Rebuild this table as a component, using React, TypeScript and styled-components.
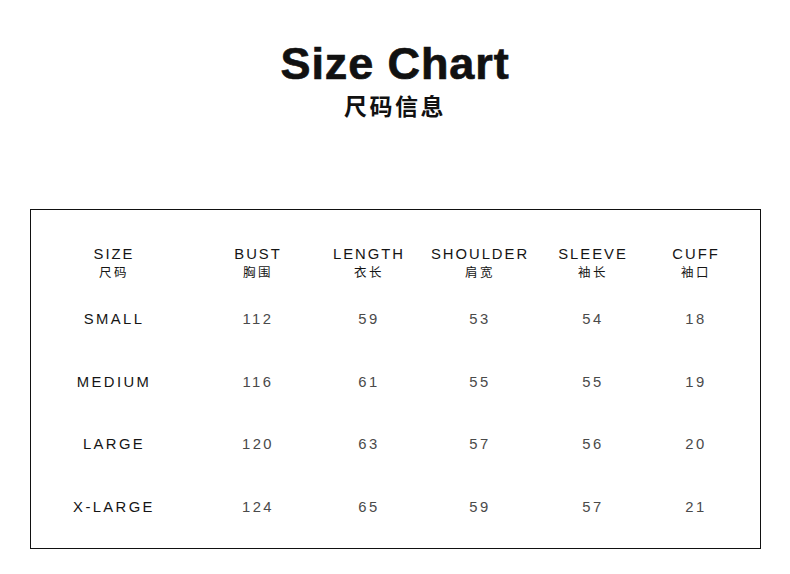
import React from "react";
import styled, { createGlobalStyle } from "styled-components";

const Global = createGlobalStyle`
  html, body { margin: 0; padding: 0; background: #ffffff; }
  body { width: 790px; height: 574px; overflow: hidden; font-family: "Liberation Sans", Arial, "Noto Sans CJK SC", sans-serif; }
`;

const Page = styled.div`
  width: 790px;
  height: 574px;
  display: flex;
  flex-direction: column;
  align-items: center;
  padding-top: 37px;
  box-sizing: border-box;
`;

const Title = styled.h1`
  margin: 0;
  font-family: "Liberation Sans", Arial, sans-serif;
  font-weight: 700;
  font-size: 45px;
  line-height: 53px;
  letter-spacing: 0.9px;
  color: #111;
  -webkit-text-stroke: 0.7px #111;
`;

const Subtitle = styled.h2`
  margin: 0;
  font-family: "Noto Sans CJK SC", sans-serif;
  font-weight: 700;
  font-size: 23px;
  line-height: 30px;
  letter-spacing: 2.5px;
  color: #111;
`;

const Box = styled.div`
  margin-top: 89px;
  margin-left: 1px;
  width: 731px;
  height: 340px;
  box-sizing: border-box;
  border: 1px solid #111;
  padding-top: 36px;
`;

const Grid = styled.div`
  display: grid;
  grid-template-columns: 164px 124px 98px 124px 102px 104px;
  grid-auto-rows: 62.5px;
  grid-template-rows: 42px;
`;

const HeadCell = styled.div`
  display: flex;
  flex-direction: column;
  align-items: center;
  padding-left: 2px;
`;

const HeadEn = styled.span`
  font-family: "Liberation Sans", Arial, sans-serif;
  font-size: 14.8px;
  line-height: 17px;
  letter-spacing: 2px;
  color: #151515;
`;

const HeadZh = styled.span`
  font-family: "Noto Sans CJK SC", sans-serif;
  font-size: 12.5px;
  line-height: 17px;
  letter-spacing: 2.5px;
  color: #151515;
`;

const Cell = styled.div<{ $label?: boolean }>`
  display: flex;
  align-items: center;
  justify-content: center;
  padding-left: 2px;
  font-family: "Liberation Sans", Arial, sans-serif;
  font-size: 14.8px;
  letter-spacing: 2.4px;
  color: ${(p) => (p.$label ? "#151515" : "#4a4a4a")};
`;

const headers: [string, string][] = [
  ["SIZE", "尺码"],
  ["BUST", "胸围"],
  ["LENGTH", "衣长"],
  ["SHOULDER", "肩宽"],
  ["SLEEVE", "袖长"],
  ["CUFF", "袖口"],
];

const rows: (string | number)[][] = [
  ["SMALL", 112, 59, 53, 54, 18],
  ["MEDIUM", 116, 61, 55, 55, 19],
  ["LARGE", 120, 63, 57, 56, 20],
  ["X-LARGE", 124, 65, 59, 57, 21],
];

export default function App() {
  return (
    <>
      <Global />
      <Page>
        <Title>Size Chart</Title>
        <Subtitle>尺码信息</Subtitle>
        <Box>
          <Grid>
            {headers.map(([en, zh]) => (
              <HeadCell key={en}>
                <HeadEn>{en}</HeadEn>
                <HeadZh>{zh}</HeadZh>
              </HeadCell>
            ))}
            {rows.map((r) =>
              r.map((v, i) => (
                <Cell key={`${r[0]}-${i}`} $label={i === 0}>
                  {v}
                </Cell>
              ))
            )}
          </Grid>
        </Box>
      </Page>
    </>
  );
}
